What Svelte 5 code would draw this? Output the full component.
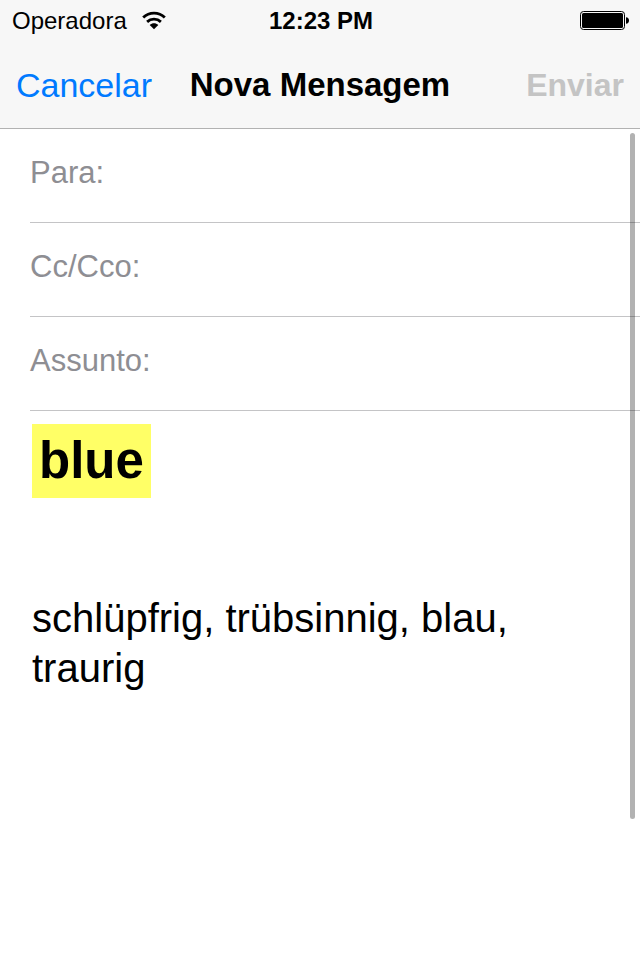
<script lang="ts">
	let to = $state('');
	let cc = $state('');
	let subject = $state('');

	const canSend = $derived(to.trim().length > 0);
</script>

<svelte:head>
	<title>Nova Mensagem</title>
</svelte:head>

<div class="screen">
	<header class="header">
		<div class="status">
			<div class="status__carrier">
				<span>Operadora</span>
				<svg width="26" height="20" viewBox="0 0 26 20" aria-hidden="true">
					<g fill="none" stroke="#000" stroke-width="2.8">
						<path d="M2.2 6.6C8.2 0.6 17.8 0.6 23.8 6.6" />
						<path d="M6.1 10.9C10 7.3 16 7.3 19.9 10.9" />
					</g>
					<path d="M8.7 13.9C11.2 11.7 14.8 11.7 17.3 13.9L13 18.3Z" />
				</svg>
			</div>
			<time class="status__time">12:23 PM</time>
			<div class="status__battery">
				<svg width="50" height="20" viewBox="0 0 50 20" aria-hidden="true">
					<rect x="0.5" y="0.5" width="44" height="18" rx="3" fill="none" stroke="#000" />
					<rect x="2" y="2" width="41" height="15" rx="1.5" />
					<path d="M46 6.3Q49 6.5 49 9.5T46 12.7Z" />
				</svg>
			</div>
		</div>
		<nav class="nav">
			<button class="nav__button" type="button">Cancelar</button>
			<h1 class="nav__title">Nova Mensagem</h1>
			<button class="nav__button nav__button--send" type="submit" form="compose" disabled={!canSend}>Enviar</button>
		</nav>
	</header>

	<main class="content">
		<form id="compose" onsubmit={(event) => event.preventDefault()}>
			<div class="field">
				<label for="to">Para:</label>
				<input id="to" type="text" autocomplete="off" bind:value={to} />
			</div>
			<div class="field">
				<label for="cc">Cc/Cco:</label>
				<input id="cc" type="text" autocomplete="off" bind:value={cc} />
			</div>
			<div class="field">
				<label for="subject">Assunto:</label>
				<input id="subject" type="text" autocomplete="off" bind:value={subject} />
			</div>
		</form>

		<article class="message" lang="de">
			<h2 class="message__word"><mark>blue</mark></h2>
			<p>schlüpfrig, trübsinnig, blau, traurig</p>
		</article>

		<div class="scrollbar" aria-hidden="true"></div>
	</main>
</div>

<style>
	:global(body) {
		margin: 0;
		background: #fff;
	}

	.screen {
		display: flex;
		flex-direction: column;
		min-height: 100vh;
		font-family: 'Liberation Sans', Arial, sans-serif;
		color: #000;
		background: #fff;
	}

	.header {
		background: #f7f7f7;
		border-bottom: 1px solid #b2b2b2;
	}

	.status,
	.nav {
		display: grid;
		grid-template-columns: 1fr auto 1fr;
		align-items: center;
	}

	.status {
		height: 40px;
		padding: 1px 10px 0 12px;
		font-size: 24px;
		line-height: 28px;
	}

	.status__carrier {
		display: flex;
		align-items: center;
		gap: 14px;
	}

	.status__time {
		font-weight: 700;
	}

	.status__battery {
		display: flex;
		justify-content: flex-end;
	}

	.nav {
		height: 87px;
		padding: 0 16px;
		font-size: 34px;
		line-height: 40px;
	}

	.nav__button {
		justify-self: start;
		padding: 0;
		border: 0;
		background: none;
		font: inherit;
		color: #007aff;
		cursor: pointer;
	}

	.nav__button--send {
		justify-self: end;
		font-size: 32px;
		font-weight: 700;
	}

	.nav__button:disabled {
		color: #c4c4c4;
		cursor: default;
	}

	.nav__title {
		margin: 0;
		font-size: 33px;
		font-weight: 700;
	}

	.content {
		position: relative;
		flex: 1;
	}

	.field {
		display: flex;
		align-items: center;
		gap: 12px;
		height: 88px;
		margin-left: 30px;
		padding: 0 30px 5px 0;
		border-bottom: 1px solid #c4c4c6;
		font-size: 31px;
		line-height: 36px;
	}

	.field label {
		color: #8e8e93;
	}

	.field input {
		flex: 1;
		min-width: 0;
		padding: 0;
		border: 0;
		outline: none;
		background: none;
		font: inherit;
	}

	.message {
		padding: 13px 32px 32px;
		font-size: 40px;
		line-height: 50px;
	}

	.message__word {
		margin: 0 0 95px;
		font-size: 51px;
		line-height: 74px;
	}

	.message__word mark {
		display: inline-block;
		padding: 0 7px;
		color: #000;
		background: #ff6;
	}

	.message p {
		margin: 0;
	}

	.scrollbar {
		position: absolute;
		top: 4px;
		right: 5px;
		bottom: 17%;
		width: 5px;
		border-radius: 3px;
		background: rgba(0, 0, 0, 0.3);
	}
</style>
